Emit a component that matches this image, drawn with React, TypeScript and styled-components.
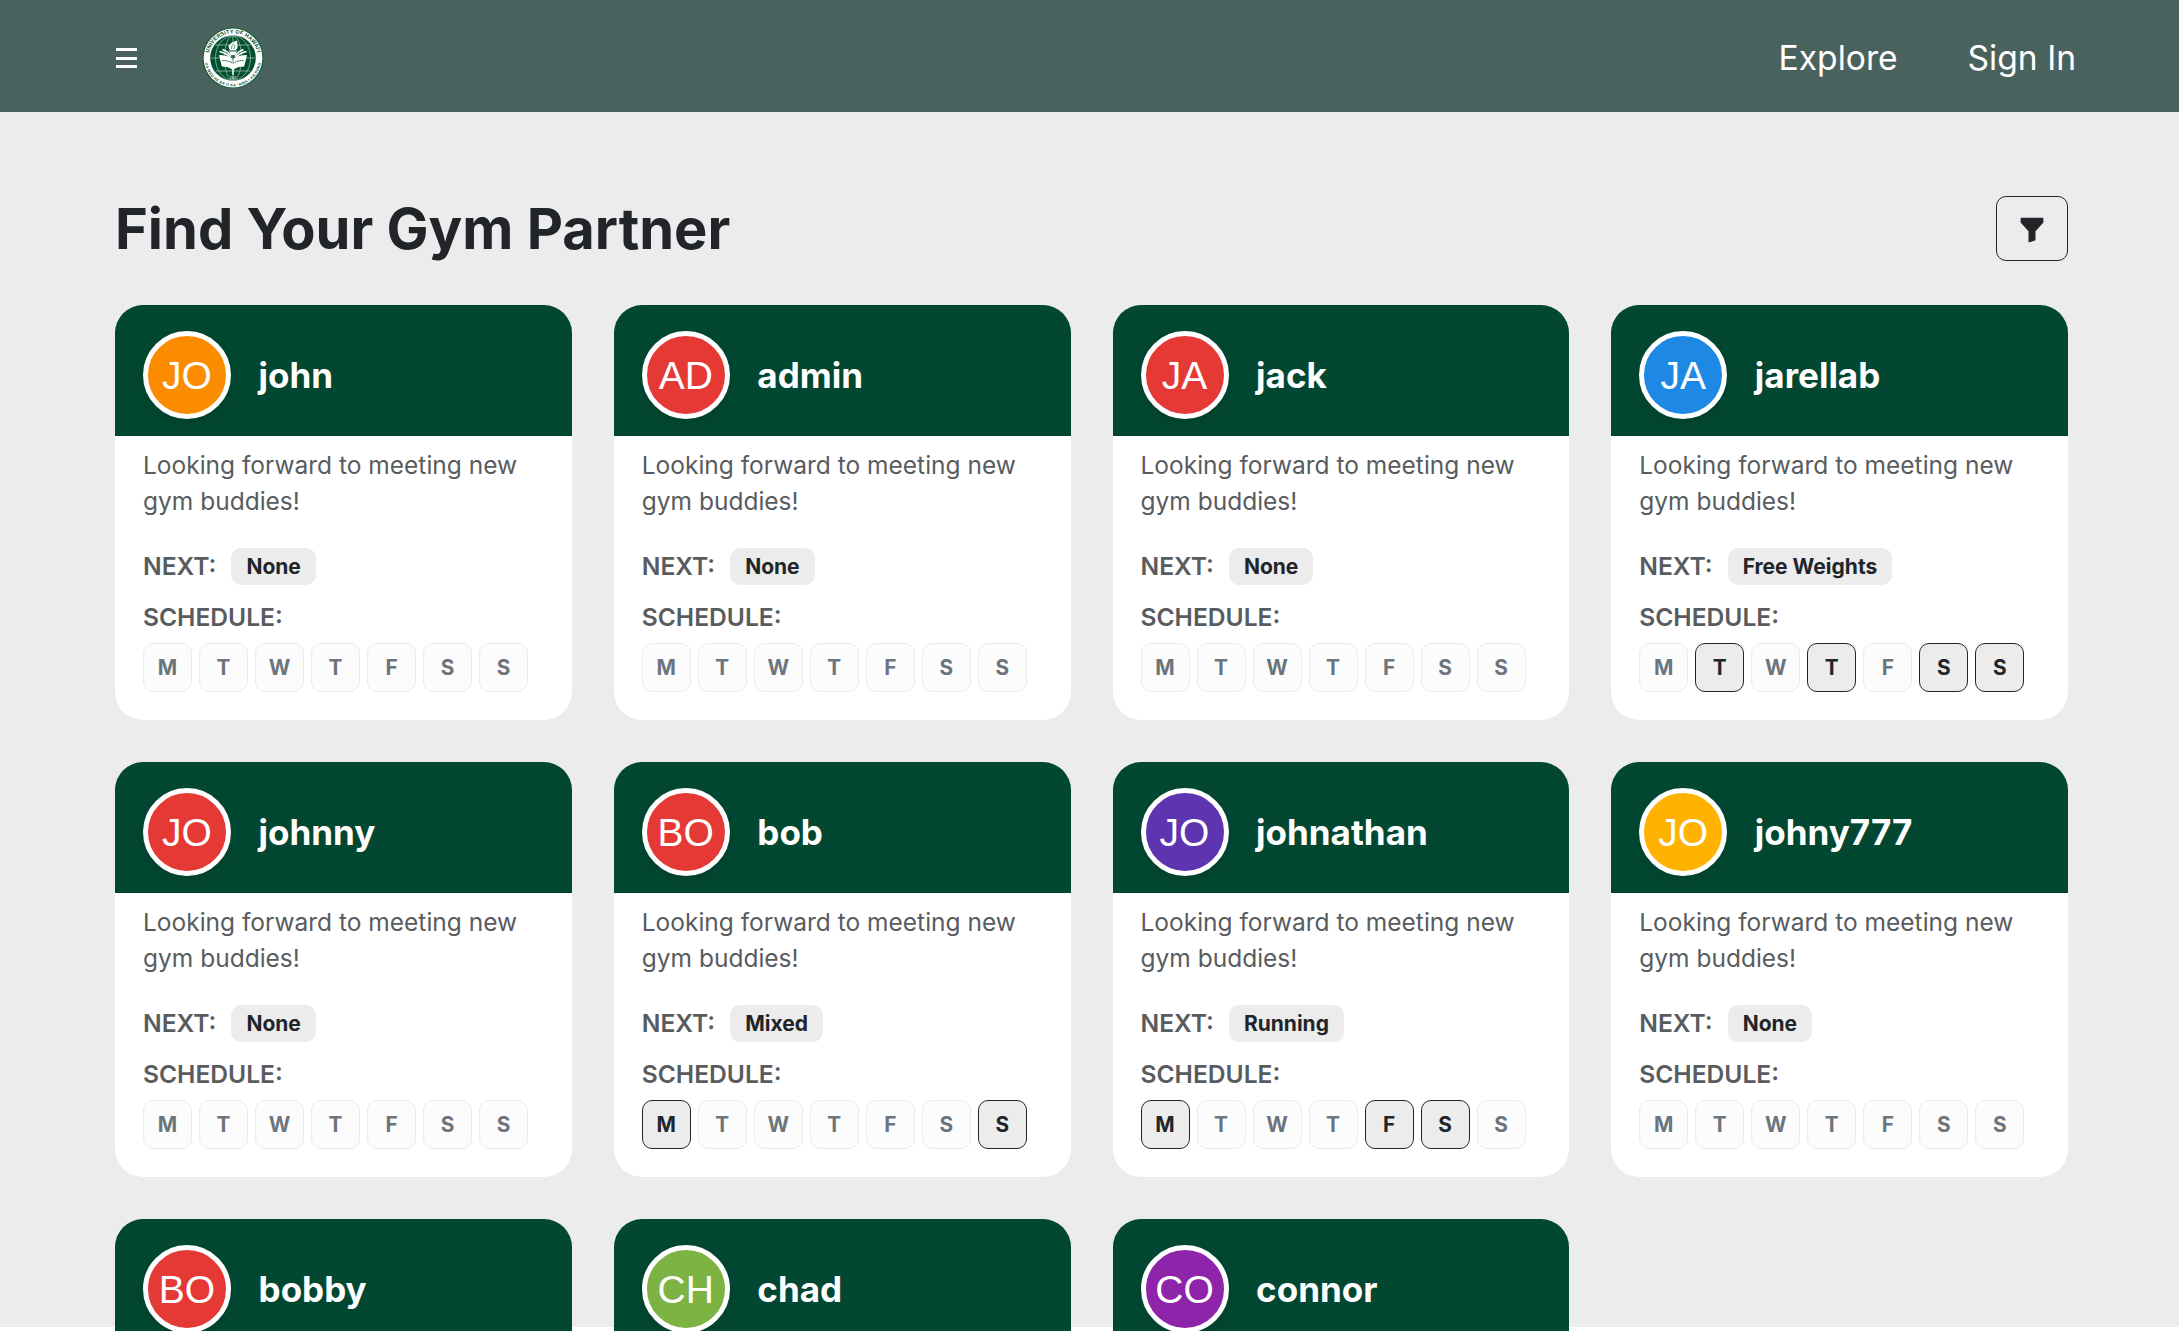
import React from "react";
import styled, { createGlobalStyle } from "styled-components";

const GlobalStyle = createGlobalStyle`
  *, *::before, *::after { box-sizing: border-box; }
  html, body { margin: 0; height: 100%; overflow: hidden; background: #ffffff; }
  body { font-family: Inter, "Liberation Sans", sans-serif; color: #212529; }
  h1, h2, p { margin: 0; }
`;

const Page = styled.div`
  height: 1327px;
  background: #ececec;
`;

const NavBar = styled.header`
  display: flex;
  align-items: center;
  justify-content: space-between;
  height: 112px;
  padding: 4px 103px 0 115px;
  background: #4a625d;
`;

const NavGroup = styled.div<{ $gap: number }>`
  display: flex;
  align-items: center;
  gap: ${(p) => p.$gap}px;
`;

const MenuButton = styled.button`
  display: flex;
  flex-direction: column;
  justify-content: space-between;
  width: 23px;
  height: 20px;
  padding: 0 1px;
  border: 0;
  background: none;

  span {
    height: 3px;
    background: #ffffff;
  }
`;

const NavLink = styled.a`
  margin-bottom: 1px;
  font-size: 33.6px;
  line-height: 50px;
  color: #ffffff;
`;

const Main = styled.main`
  display: flex;
  flex-direction: column;
  padding: 84px 111px 0 115px;
`;

const TitleRow = styled.div`
  display: flex;
  align-items: center;
  justify-content: space-between;
  height: 65px;
  margin-bottom: 44px;
`;

const Title = styled.h1`
  padding-top: 2px;
  font-size: 56px;
  line-height: 67px;
  font-weight: 700;
`;

const FilterButton = styled.button`
  display: flex;
  align-items: center;
  justify-content: center;
  width: 72px;
  height: 65px;
  padding: 3px 0 0;
  border: 1px solid #212529;
  border-radius: 10px;
  background: transparent;
  color: #212529;
`;

const Grid = styled.section`
  display: grid;
  grid-template-columns: repeat(4, 1fr);
  gap: 42px;
`;

const Card = styled.article`
  height: 415px;
  overflow: hidden;
  border-radius: 28px;
  background: #ffffff;
`;

const CardHeader = styled.div`
  display: flex;
  align-items: center;
  gap: 27.6px;
  height: 131px;
  padding: 9px 28px 0;
  border-bottom: 1px solid #03402c;
  background: #024731;
`;

const Avatar = styled.div<{ $color: string }>`
  display: flex;
  align-items: center;
  justify-content: center;
  width: 88px;
  height: 88px;
  padding-top: 2px;
  border: 5px solid #ffffff;
  border-radius: 50%;
  background: ${(p) => p.$color};
  box-shadow: 0 4px 9px rgba(0, 0, 0, 0.1);
  font-family: "Liberation Sans", Arial, sans-serif;
  font-size: 39px;
  color: #ffffff;
`;

const Name = styled.h2`
  font-size: 35px;
  line-height: 42px;
  font-weight: 700;
  color: #ffffff;
`;

const CardBody = styled.div`
  padding: 11px 28px 0;
`;

const Bio = styled.p`
  margin-bottom: 29px;
  font-size: 24.5px;
  line-height: 36px;
  color: #595c5f;
`;

const NextRow = styled.div`
  display: flex;
  align-items: center;
  gap: 15px;
  height: 37px;
`;

const Label = styled.div`
  font-size: 24.6px;
  line-height: 37px;
  font-weight: 600;
  font-feature-settings: "case";
  color: #595c5f;
`;

const Tag = styled.span`
  padding: 0 15px;
  border-radius: 10px;
  background: #ececec;
  font-size: 21px;
  line-height: 37px;
  font-weight: 700;
`;

const ScheduleLabel = styled(Label)`
  margin: 14px 0 7px;
`;

const Days = styled.div`
  display: flex;
  gap: 7px;
`;

const Day = styled.div<{ $active: boolean }>`
  display: flex;
  align-items: center;
  justify-content: center;
  width: 49px;
  height: 49px;
  border: 1px solid ${(p) => (p.$active ? "#212529" : "#ebebed")};
  border-radius: 10px;
  background: ${(p) => (p.$active ? "#ececec" : "#fcfcfc")};
  color: ${(p) => (p.$active ? "#212529" : "#6c757d")};
  font-size: 20.8px;
  font-weight: 700;
`;

type Partner = { name: string; color: string; next: string; days: number[] };

const partners: Partner[] = [
  { name: "john", color: "#fb8c00", next: "None", days: [] },
  { name: "admin", color: "#e53935", next: "None", days: [] },
  { name: "jack", color: "#e53935", next: "None", days: [] },
  { name: "jarellab", color: "#1e88e5", next: "Free Weights", days: [1, 3, 5, 6] },
  { name: "johnny", color: "#e53935", next: "None", days: [] },
  { name: "bob", color: "#e53935", next: "Mixed", days: [0, 6] },
  { name: "johnathan", color: "#5e35b1", next: "Running", days: [0, 4, 5] },
  { name: "johny777", color: "#ffb300", next: "None", days: [] },
  { name: "bobby", color: "#e53935", next: "None", days: [] },
  { name: "chad", color: "#7cb342", next: "None", days: [] },
  { name: "connor", color: "#8e24aa", next: "None", days: [] },
];

const week = ["M", "T", "W", "T", "F", "S", "S"];

function Seal() {
  return (
    <svg width="62" height="62" viewBox="0 0 62 62" aria-label="University of Hawaii seal">
      <defs>
        <path id="sealTop" d="M6.3 31a24.7 24.7 0 0 1 49.4 0" />
        <path id="sealBottom" d="M2.6 31a28.4 28.4 0 0 0 56.8 0" />
      </defs>
      <circle cx="31" cy="31" r="30.4" fill="#0b5a3c" />
      <circle cx="31" cy="31" r="29.4" fill="#fff" />
      <circle cx="31" cy="31" r="22.8" fill="#024f30" />
      <g fill="none" stroke="#a9c8b8" strokeWidth="0.7">
        <path d="M31 8.500v45M9 31h44M13.500 18h35M13.500 44h35" />
        <ellipse cx="31" cy="31" rx="8.500" ry="22.300" />
        <ellipse cx="31" cy="31" rx="17.500" ry="22.300" />
      </g>
      <path d="M17 28c5.500 0 10.500 1.200 14 4 3.500-2.800 8.500-4 14-4l-2.800 11.500c-4.700 0-8 1-11.200 3.500-3.200-2.500-6.500-3.500-11.200-3.500z" fill="#fff" />
      <path d="M17.500 24.500q7 1.500 10.500 6M20.500 22.500q6 2 8.500 7M44.500 24.500q-7 1.500-10.500 6M41.500 22.500q-6 2-8.500 7" fill="none" stroke="#fff" strokeWidth="1.500" />
      <path d="M26.500 23.500h9l-2.500 4.500h-4z M30.200 42h1.600l-.2 6h-1.200z" fill="#fff" />
      <path d="M28 23c-3.500-4 0-7.500 7.500-9.500-1.500 2.500 2 6-1.500 9.500z" fill="#fff" />
      <path d="M29.500 22c0-3 1-4.500 3-6M31.800 22c1-1.500 1-2.500.8-4M27 24.200h8" fill="none" stroke="#024f30" strokeWidth="0.600" />
      <path d="M31 29v6M20.500 33.500q6.500 0 10.500 3Q35 33.500 41.500 33.500" fill="none" stroke="#024f30" strokeWidth="0.900" strokeDasharray="2 .6" />
      <text fontFamily="Liberation Sans, sans-serif" fontSize="5.400" fontWeight="700" fill="#024f30" textLength="67">
        <textPath href="#sealTop" startOffset="5">UNIVERSITY OF HAWAI‘I</textPath>
      </text>
      <text fontFamily="Liberation Sans, sans-serif" fontSize="3.700" fontWeight="700" fill="#024f30" textLength="79">
        <textPath href="#sealBottom" startOffset="5">UA MAU KE EA O KA ‘AINA I KA PONO</textPath>
      </text>
      <text x="31" y="51.500" fontFamily="Liberation Sans, sans-serif" fontSize="3" fill="#fff" textAnchor="middle">1907</text>
    </svg>
  );
}

function FunnelIcon() {
  return (
    <svg width="28" height="28" viewBox="0 0 16 16" fill="currentColor">
      <path d="M1.500 1.500A.5.5 0 0 1 2 1h12a.5.5 0 0 1 .5.5v2a.5.5 0 0 1-.128.334L10 8.692V13.500a.5.5 0 0 1-.342.474l-3 1A.5.5 0 0 1 6 14.500V8.692L1.628 3.834A.5.5 0 0 1 1.500 3.500z" />
    </svg>
  );
}

function PartnerCard({ partner }: { partner: Partner }) {
  return (
    <Card>
      <CardHeader>
        <Avatar $color={partner.color}>{partner.name.slice(0, 2).toUpperCase()}</Avatar>
        <Name>{partner.name}</Name>
      </CardHeader>
      <CardBody>
        <Bio>Looking forward to meeting new gym buddies!</Bio>
        <NextRow>
          <Label>NEXT:</Label>
          <Tag>{partner.next}</Tag>
        </NextRow>
        <ScheduleLabel>SCHEDULE:</ScheduleLabel>
        <Days>
          {week.map((d, i) => (
            <Day key={i} $active={partner.days.includes(i)}>{d}</Day>
          ))}
        </Days>
      </CardBody>
    </Card>
  );
}

export default function App() {
  return (
    <>
      <GlobalStyle />
      <Page>
        <NavBar>
          <NavGroup $gap={64}>
            <MenuButton aria-label="Menu"><span /><span /><span /></MenuButton>
            <Seal />
          </NavGroup>
          <NavGroup $gap={70}>
            <NavLink>Explore</NavLink>
            <NavLink>Sign In</NavLink>
          </NavGroup>
        </NavBar>
        <Main>
          <TitleRow>
            <Title>Find Your Gym Partner</Title>
            <FilterButton aria-label="Filter"><FunnelIcon /></FilterButton>
          </TitleRow>
          <Grid>
            {partners.map((p) => <PartnerCard key={p.name} partner={p} />)}
          </Grid>
        </Main>
      </Page>
    </>
  );
}
